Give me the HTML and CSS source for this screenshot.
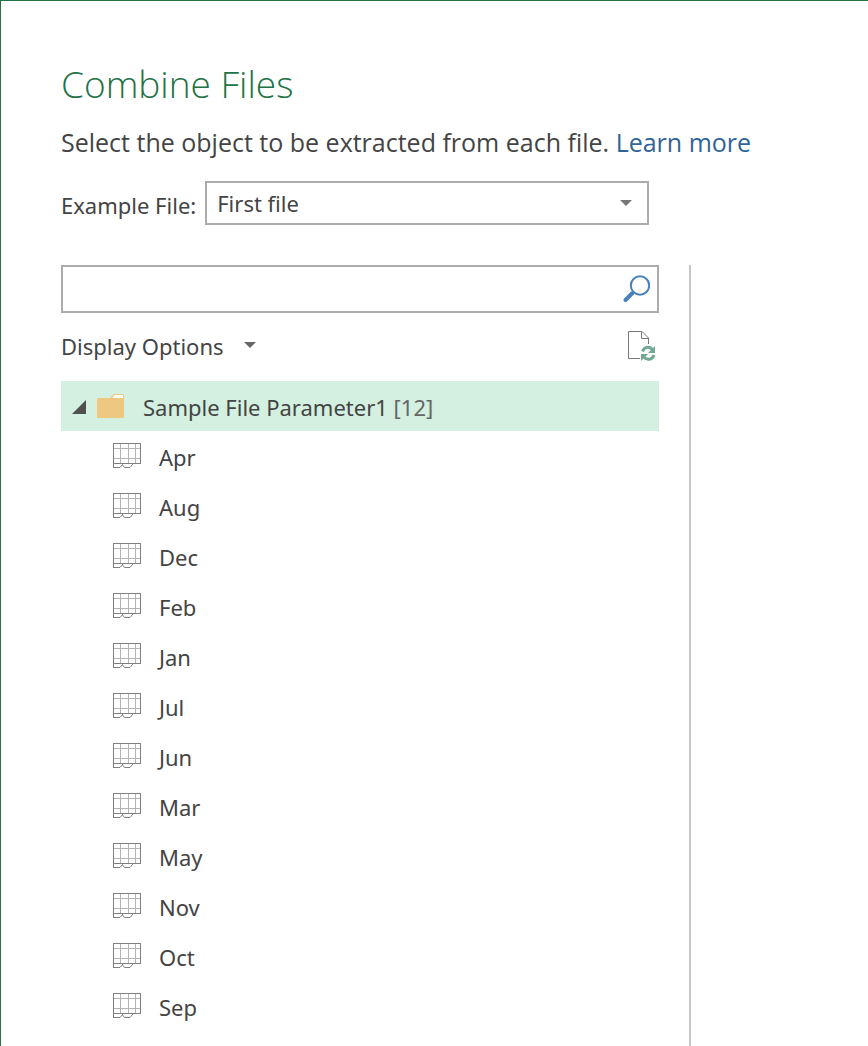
FILE: index.html
```html
<!DOCTYPE html>
<html lang="en">
<head>
<meta charset="utf-8">
<meta name="viewport" content="width=device-width, initial-scale=1">
<title>Combine Files</title>
<link rel="stylesheet" href="styles.css">
</head>
<body>
<svg class="symbols" aria-hidden="true">
  <symbol id="sheet" viewBox="0 0 28 26">
    <g fill="none" shape-rendering="crispEdges">
      <path stroke="#b4b4b4" d="M1 5.500H27M1 15.500H27M7.500 1V20M15.500 1V20M22.500 1V20"/>
      <path stroke="#808080" d="M.5 25V.5H27.500V20.500H.5"/>
    </g>
    <path fill="none" stroke="#808080" d="M.5 24.500H7L10 21M9.500 22L11.500 24.500H17L20 21"/>
  </symbol>
</svg>
<main class="dialog">
  <h1 class="title">Combine Files</h1>
  <p class="intro">Select the object to be extracted from each file. <a class="link" href="#">Learn more</a></p>
  <div class="example">
    <label class="example-label" for="example-file">Example File:</label>
    <div class="select-box">
      <select class="select" id="example-file"><option>First file</option></select>
      <svg class="select-arrow" width="12" height="6" viewBox="0 0 12 6" aria-hidden="true"><path fill="#777" d="M0 0H12L6 6Z"/></svg>
    </div>
  </div>
  <div class="panes">
    <section class="navigator">
      <div class="search">
        <input class="search-input" type="search" aria-label="Search">
        <button class="icon-button" type="button" aria-label="Run search">
          <svg width="28" height="28" viewBox="0 0 28 28" fill="none" stroke="#4a80bd"><circle cx="18" cy="10.500" r="9.200" stroke-width="2"/><path stroke-width="4" stroke-linecap="round" d="M10.500 18L3.500 25"/></svg>
        </button>
      </div>
      <div class="toolbar">
        <button class="options" type="button">Display Options
          <svg class="options-arrow" width="12" height="6" viewBox="0 0 12 6" aria-hidden="true"><path fill="#666" d="M0 0H12L6 6Z"/></svg>
        </button>
        <button class="icon-button" type="button" aria-label="Refresh">
          <svg width="28" height="30" viewBox="0 0 28 30" fill="none">
            <path stroke="#777" d="M12 27.500H.5V.5H14L20.500 7V13M13.500.5V7.500H20.500"/>
            <g stroke="#72a893" stroke-width="3"><path d="M14.500 20.500C16 15.500 22 15 24.500 19"/><path d="M26 24C24.500 29 18.500 29.500 16 26"/></g>
            <path fill="#72a893" d="M27 15V22H20ZM13 30V23H20Z"/>
          </svg>
        </button>
      </div>
      <ul class="tree">
        <li>
          <div class="row row-root">
            <svg class="toggle" width="14" height="14" viewBox="0 0 14 14" aria-hidden="true"><path fill="#505050" d="M14 0V14H0Z"/></svg>
            <svg class="folder" width="28" height="26" viewBox="0 0 28 26" aria-hidden="true"><path fill="#eec780" d="M0 6L1 5H13L17 1H26L27 2V25H0Z"/><path fill="#fff" d="M15 5L18 2H26V5Z"/></svg>
            <span>Sample File Parameter1 <span class="count">[12]</span></span>
          </div>
          <ul class="branch">
            <li class="row"><svg class="sheet"><use href="#sheet"/></svg>Apr</li>
            <li class="row"><svg class="sheet"><use href="#sheet"/></svg>Aug</li>
            <li class="row"><svg class="sheet"><use href="#sheet"/></svg>Dec</li>
            <li class="row"><svg class="sheet"><use href="#sheet"/></svg>Feb</li>
            <li class="row"><svg class="sheet"><use href="#sheet"/></svg>Jan</li>
            <li class="row"><svg class="sheet"><use href="#sheet"/></svg>Jul</li>
            <li class="row"><svg class="sheet"><use href="#sheet"/></svg>Jun</li>
            <li class="row"><svg class="sheet"><use href="#sheet"/></svg>Mar</li>
            <li class="row"><svg class="sheet"><use href="#sheet"/></svg>May</li>
            <li class="row"><svg class="sheet"><use href="#sheet"/></svg>Nov</li>
            <li class="row"><svg class="sheet"><use href="#sheet"/></svg>Oct</li>
            <li class="row"><svg class="sheet"><use href="#sheet"/></svg>Sep</li>
          </ul>
        </li>
      </ul>
    </section>
    <section class="preview" aria-label="Preview"></section>
  </div>
</main>
</body>
</html>
```
FILE: styles.css
```css
* { box-sizing: border-box; }
body {
  margin: 0;
  background: #fff;
  color: #444;
  font-family: "Noto Sans", "Open Sans", sans-serif;
  font-size: 22px;
  line-height: 32px;
}
button, input, select { font: inherit; color: inherit; }
ul { list-style: none; margin: 0; padding: 0; }
svg { display: block; flex: none; }
.symbols { position: absolute; width: 0; height: 0; }
.dialog {
  display: flex;
  flex-direction: column;
  min-height: 100vh;
  padding: 55px 0 0 60px;
  border-top: 1px solid #217346;
  border-left: 1px solid #217346;
}
.title, .intro { font-family: "Open Sans", "Noto Sans", sans-serif; }
.title {
  margin: 0;
  color: #217346;
  font-size: 37px;
  font-weight: 300;
  line-height: 56px;
}
.intro { margin: 12px 0 21px; font-size: 25px; line-height: 36px; }
.link { color: #2f6499; text-decoration: none; }
.example { display: flex; align-items: center; gap: 9px; }
.example-label { padding-top: 4px; }
.select-box { position: relative; flex: 0 1 444px; }
.select {
  display: block;
  width: 100%;
  height: 44px;
  padding: 0 36px 0 10px;
  border: 2px solid #ababab;
  border-radius: 0;
  background: #fff;
  appearance: none;
}
.select-arrow { position: absolute; right: 17px; top: 19px; pointer-events: none; }
.panes {
  display: grid;
  flex: 1;
  grid-template-columns: minmax(0, 630px) 1fr;
  margin-top: 40px;
}
.navigator { padding-right: 30px; border-right: 2px solid #c6c6c6; }
.search {
  display: flex;
  align-items: center;
  height: 48px;
  padding-right: 7px;
  border: 2px solid #ababab;
}
.search-input {
  flex: 1;
  min-width: 0;
  height: 44px;
  padding: 0 10px;
  border: 0;
  outline: 0;
  background: none;
  appearance: none;
}
.icon-button { padding: 0; border: 0; background: none; }
.toolbar {
  display: flex;
  align-items: center;
  justify-content: space-between;
  height: 68px;
  padding: 0 3px 2px 0;
}
.options {
  display: flex;
  align-items: center;
  gap: 20px;
  padding: 0;
  border: 0;
  background: none;
}
.options-arrow { margin-bottom: 2px; }
.row { display: flex; align-items: center; height: 50px; padding: 2px 0 0 52px; }
.row-root { padding-left: 11px; background: #d3f0e0; }
.folder { margin: 0 18px 2px 11px; }
.count { color: #666; }
.sheet { width: 28px; height: 26px; margin: 0 18px 2px 0; }
```
